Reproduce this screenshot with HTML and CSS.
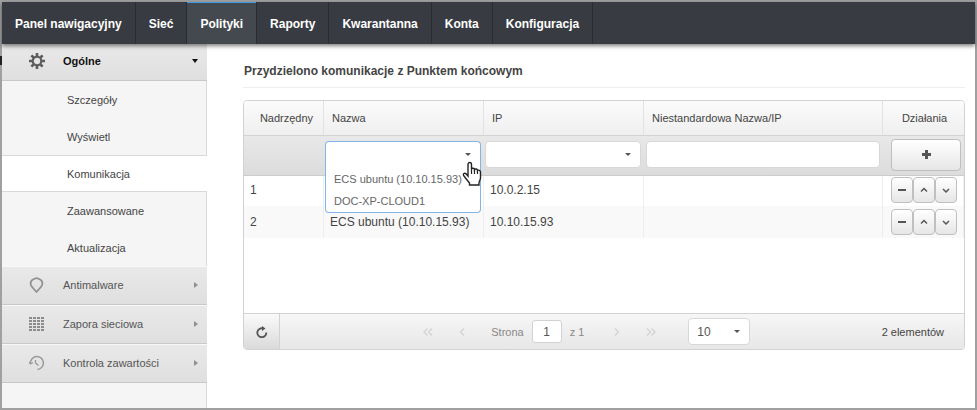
FILE: index.html
```html
<!DOCTYPE html>
<html lang="pl">
<head>
    <meta charset="UTF-8">
    <title>Polityki - Komunikacja</title>
    <link rel="stylesheet" href="styles.css">
</head>
<body>
    <div class="app">
        <nav class="topnav">
            <a href="#">Panel nawigacyjny</a>
            <a href="#">Sieć</a>
            <a href="#" class="active">Polityki</a>
            <a href="#">Raporty</a>
            <a href="#">Kwarantanna</a>
            <a href="#">Konta</a>
            <a href="#">Konfiguracja</a>
        </nav>

        <div class="layout">
            <aside class="sidebar">
                <button class="group open" type="button">
                    <svg class="group-icon" viewBox="0 0 16 16" width="16" height="16">
                        <circle cx="8" cy="8" r="4.300" fill="none" stroke="#5c5c5c" stroke-width="2.200"/>
                        <path d="M8 0v3M8 13v3M0 8h3M13 8h3M2.400 2.400l2.100 2.100M11.500 11.500l2.100 2.100M13.600 2.400l-2.100 2.100M4.500 11.500l-2.100 2.100" stroke="#5c5c5c" stroke-width="2.600"/>
                    </svg>
                    <span>Ogólne</span>
                    <i class="arrow-down"></i>
                </button>
                <ul class="submenu">
                    <li><a href="#">Szczegóły</a></li>
                    <li><a href="#">Wyświetl</a></li>
                    <li class="selected"><a href="#">Komunikacja</a></li>
                    <li><a href="#">Zaawansowane</a></li>
                    <li><a href="#">Aktualizacja</a></li>
                </ul>
                <button class="group" type="button">
                    <svg class="group-icon" viewBox="0 0 16 16" width="16" height="16">
                        <path d="M7.500 1.200C9 1.200 9.800 2.200 11.800 3c1.700 1.400 1.900 3.600 1 5.600-.8 1.600-2.800 3.600-5.300 6.200C5 12.200 3 10.200 2.200 8.600 1.300 6.600 1.500 4.400 3.200 3c2-.8 2.800-1.800 4.300-1.800z" fill="none" stroke="#929292" stroke-width="1.800"/>
                    </svg>
                    <span>Antimalware</span>
                    <i class="arrow-right"></i>
                </button>
                <button class="group" type="button">
                    <svg class="group-icon" viewBox="0 0 16 16" width="16" height="16">
                        <path d="M0 2h15M0 5h15M0 8h15M0 11h15M0 14h15" fill="none" stroke="#8c8c8c" stroke-width="2" stroke-dasharray="3 1"/>
                    </svg>
                    <span>Zapora sieciowa</span>
                    <i class="arrow-right"></i>
                </button>
                <button class="group" type="button">
                    <svg class="group-icon" viewBox="0 0 16 16" width="16" height="16" fill="none" stroke="#989898">
                        <path d="M1.500 9A6.500 6.500 0 1 1 8.500 14.500" stroke-width="1.500"/>
                        <path d="M0 7l1.500 2L4 7.500" stroke-width="1.300"/>
                        <path d="M6.500 5v3l3 2.500" stroke-width="1.300"/>
                    </svg>
                    <span>Kontrola zawartości</span>
                    <i class="arrow-right"></i>
                </button>
            </aside>

            <main class="content">
                <h1>Przydzielono komunikacje z Punktem końcowym</h1>

                <div class="grid">
                    <table>
                        <colgroup>
                            <col class="col-priority">
                            <col class="col-name">
                            <col class="col-ip">
                            <col>
                            <col class="col-actions">
                        </colgroup>
                        <thead>
                            <tr class="head">
                                <th class="center">Nadrzędny</th>
                                <th>Nazwa</th>
                                <th>IP</th>
                                <th>Niestandardowa Nazwa/IP</th>
                                <th class="center">Działania</th>
                            </tr>
                            <tr class="filters">
                                <td></td>
                                <td>
                                    <div class="combo expanded">
                                        <select aria-label="Nazwa"><option></option></select>
                                        <i class="caret"></i>
                                        <ul class="options">
                                            <li>ECS ubuntu (10.10.15.93)</li>
                                            <li>DOC-XP-CLOUD1</li>
                                        </ul>
                                        <svg class="pointer" viewBox="0 0 20 26" width="20" height="26">
                                            <path d="M6 15V3.500C6 .8 9.500.8 9.500 3.500V8c.5-1.200 3-1 3 .5 1-1 3-.6 3 1 1.200-.8 3 0 3 1.500v6c0 2-1.500 3-1.500 5v2H7.500V22C6 20.500 4.500 18 2 15c-1.600-2 .6-3.800 2.300-2L6 15z" fill="#fff" stroke="#222" stroke-width="1.400"/>
                                            <path d="M9.500 8v5M12.500 9V13M15.500 10V13" stroke="#222" stroke-width="1.200"/>
                                        </svg>
                                    </div>
                                </td>
                                <td>
                                    <div class="combo">
                                        <select aria-label="IP"><option></option></select>
                                        <i class="caret"></i>
                                    </div>
                                </td>
                                <td><input class="field" type="text" aria-label="Niestandardowa Nazwa/IP"></td>
                                <td>
                                    <button class="add" type="button" aria-label="Dodaj">
                                        <svg viewBox="0 0 9 9" width="9" height="9"><path d="M4.500 0v9M0 4.500h9" stroke="#555" stroke-width="3"/></svg>
                                    </button>
                                </td>
                            </tr>
                        </thead>
                        <tbody>
                            <tr>
                                <td>1</td>
                                <td></td>
                                <td>10.0.2.15</td>
                                <td></td>
                                <td>
                                    <div class="actions">
                                        <button type="button" aria-label="Usuń"><svg viewBox="0 0 8 8" width="8" height="8"><path d="M0 4h8" stroke-width="2"/></svg></button>
                                        <button type="button" aria-label="W górę"><svg viewBox="0 0 8 8" width="8" height="8"><path d="M1 5.500l3-3 3 3" stroke-width="1.500"/></svg></button>
                                        <button type="button" aria-label="W dół"><svg viewBox="0 0 8 8" width="8" height="8"><path d="M1 3l3 3 3-3" stroke-width="1.500"/></svg></button>
                                    </div>
                                </td>
                            </tr>
                            <tr class="alt">
                                <td>2</td>
                                <td>ECS ubuntu (10.10.15.93)</td>
                                <td>10.10.15.93</td>
                                <td></td>
                                <td>
                                    <div class="actions">
                                        <button type="button" aria-label="Usuń"><svg viewBox="0 0 8 8" width="8" height="8"><path d="M0 4h8" stroke-width="2"/></svg></button>
                                        <button type="button" aria-label="W górę"><svg viewBox="0 0 8 8" width="8" height="8"><path d="M1 5.500l3-3 3 3" stroke-width="1.500"/></svg></button>
                                        <button type="button" aria-label="W dół"><svg viewBox="0 0 8 8" width="8" height="8"><path d="M1 3l3 3 3-3" stroke-width="1.500"/></svg></button>
                                    </div>
                                </td>
                            </tr>
                        </tbody>
                    </table>

                    <div class="pager">
                        <button class="refresh" type="button" aria-label="Odśwież">
                            <svg viewBox="0 0 12 12" width="12" height="12">
                                <path d="M10.300 6.500A4.500 4.500 0 1 1 7 2.400" fill="none" stroke="#555" stroke-width="1.800"/>
                                <path d="M6 0l3.500 2.500L6 5z" fill="#555"/>
                            </svg>
                        </button>
                        <div class="pages">
                            <button class="step" type="button" aria-label="Pierwsza"><svg viewBox="0 0 10 8" width="10" height="8"><path d="M4.500.5L1 4l3.500 3.500M9 .5L5.500 4 9 7.500"/></svg></button>
                            <button class="step" type="button" aria-label="Poprzednia"><svg viewBox="0 0 10 8" width="10" height="8"><path d="M7 .5L3.500 4 7 7.500"/></svg></button>
                            <label for="page">Strona</label>
                            <input id="page" type="text" value="1">
                            <span class="total">z 1</span>
                            <button class="step" type="button" aria-label="Następna"><svg viewBox="0 0 10 8" width="10" height="8"><path d="M3 .5L6.500 4 3 7.500"/></svg></button>
                            <button class="step" type="button" aria-label="Ostatnia"><svg viewBox="0 0 10 8" width="10" height="8"><path d="M1 .5L4.500 4 1 7.500M5.500.5L9 4 5.500 7.500"/></svg></button>
                            <div class="combo page-size">
                                <select aria-label="Elementów na stronę"><option>10</option></select>
                                <i class="caret"></i>
                            </div>
                        </div>
                        <span class="count">2 elementów</span>
                    </div>
                </div>
            </main>
        </div>
    </div>
</body>
</html>
```
FILE: styles.css
```css
* {
    box-sizing: border-box;
}

body {
    margin: 0;
    font-family: "Liberation Sans", Arial, sans-serif;
    font-size: 11px;
    color: #444;
}

button, input, select {
    font-family: inherit;
    font-size: inherit;
    color: inherit;
    margin: 0;
}

ul {
    list-style: none;
    margin: 0;
    padding: 0;
}

a {
    color: inherit;
    text-decoration: none;
}

.app {
    display: flex;
    flex-direction: column;
    min-height: 100vh;
    border: 2px solid #a0a0a0;
    background: #fff;
    position: relative;
}

/* Collapse handle on the left edge */
.app::before {
    content: "";
    position: absolute;
    left: -2px;
    top: 54px;
    width: 2px;
    height: 9px;
    background: #222;
}

/* Top navigation */
.topnav {
    display: flex;
    height: 42px;
    background: #383b42;
    box-shadow: 0 2px 4px rgba(0, 0, 0, 0.5);
    position: relative;
    z-index: 1;
}

.topnav a {
    padding: 0 13px;
    border-right: 1px solid #2a2c31;
    color: #fff;
    font-size: 12px;
    font-weight: bold;
    line-height: 44px;
}

.topnav .active {
    background: #44494f;
    box-shadow: inset 0 1px #3f9ae5;
}

.layout {
    display: flex;
    flex: 1;
}

/* Sidebar */
.sidebar {
    flex: none;
    width: 205px;
    background: #f5f5f5;
    border-right: 1px solid #d8d8d8;
}

.group {
    display: flex;
    align-items: center;
    width: 205px;
    height: 39px;
    padding: 0 9px 2px 27px;
    border: 0;
    border-top: 1px solid #f8f8f8;
    border-bottom: 1px solid #c8c8c8;
    background: linear-gradient(#e9e9e9, #dfdfdf);
    color: #555;
    text-align: left;
}

.group span {
    flex: 1;
    margin-left: 18px;
}

.group.open {
    height: 37px;
    border-top: 0;
    color: #111;
    font-weight: bold;
}

.arrow-down {
    border: 3px solid transparent;
    border-top: 4px solid #111;
    border-bottom: 0;
}

.arrow-right {
    border: 3px solid transparent;
    border-left: 4px solid #909090;
    border-right: 0;
}

.submenu a {
    display: block;
    height: 37px;
    padding-left: 65px;
    line-height: 38px;
}

.submenu .selected {
    width: 205px;
    background: #fff;
    border-top: 1px solid #d8d8d8;
    border-bottom: 1px solid #d8d8d8;
}

.submenu .selected a {
    height: 35px;
    line-height: 36px;
}

/* Content */
.content {
    flex: 1;
    min-width: 0;
    padding: 18px 10px 20px 36px;
}

h1 {
    margin: 0 0 12px;
    padding-left: 1px;
    height: 26px;
    border-bottom: 1px solid #eee;
    font-size: 12px;
    line-height: 18px;
}

.grid {
    border: 1px solid #d2d2d2;
    border-radius: 4px;
}

table {
    width: 100%;
    table-layout: fixed;
    border-collapse: separate;
    border-spacing: 0;
    margin-bottom: 75px;
}

.col-priority {
    width: 80px;
}

.col-name, .col-ip {
    width: 160px;
}

.col-actions {
    width: 81px;
}

th, td {
    padding: 0;
    text-align: left;
}

.head th {
    height: 35px;
    padding-left: 8px;
    border-right: 1px solid #e2e2e2;
    border-bottom: 1px solid #d2d2d2;
    background: linear-gradient(#fbfbfb, #efefef);
    font-weight: normal;
}

.head th:first-child {
    border-top-left-radius: 3px;
}

.head th:last-child {
    border-right: 0;
    border-top-right-radius: 3px;
}

.head .center {
    padding-left: 6px;
    text-align: center;
}

.head .center:last-child {
    padding-left: 2px;
}

.filters td {
    height: 40px;
    padding: 0 3px 2px 1px;
    border-bottom: 1px solid #ccc;
    background: linear-gradient(#e8e8e8, #dcdcdc);
}

.filters td:nth-child(4) {
    padding-left: 2px;
}

.filters td:last-child {
    padding: 0 3px 2px 8px;
}

.combo {
    position: relative;
}

.combo select, .field {
    display: block;
    width: 100%;
    height: 27px;
    padding: 0 8px;
    border: 1px solid #d8d8d8;
    border-radius: 4px;
    background: #fff;
    appearance: none;
}

.caret {
    position: absolute;
    right: 10px;
    top: 12px;
    border: 3px solid transparent;
    border-top-color: #555;
    border-bottom: 0;
    pointer-events: none;
}

.combo.expanded select {
    border-color: #83b4e8;
    border-bottom: 0;
    border-radius: 4px 4px 0 0;
}

.options {
    position: absolute;
    top: 27px;
    left: 0;
    right: 0;
    z-index: 2;
    border: 1px solid #83b4e8;
    border-top: 0;
    border-radius: 0 0 4px 4px;
    background: #fff;
    color: #666;
}

.options li {
    height: 22px;
    padding-left: 8px;
    line-height: 22px;
    white-space: nowrap;
}

.pointer {
    position: absolute;
    right: -1px;
    top: 20px;
    z-index: 3;
}

.add, .actions button {
    display: flex;
    align-items: center;
    justify-content: center;
    border: 1px solid #bfbfbf;
    border-radius: 4px;
    background: linear-gradient(#fff, #e6e6e6);
}

.add {
    width: 100%;
    height: 32px;
}

tbody td {
    height: 32px;
    padding-left: 6px;
    border-right: 1px solid #eee;
    font-size: 12px;
}

tbody tr:first-child td {
    height: 30px;
    padding-bottom: 2px;
}

tbody td:last-child {
    padding-left: 8px;
}

.alt td {
    background: #f9f9f9;
}

.actions {
    display: flex;
}

.actions button {
    width: 22px;
    height: 26px;
    padding: 0;
}

.actions path {
    fill: none;
    stroke: #555;
}

/* Pager */
.pager {
    display: flex;
    align-items: center;
    height: 36px;
    border-top: 1px solid #d2d2d2;
    border-radius: 0 0 3px 3px;
    background: linear-gradient(#f6f6f6, #e7e7e7);
}

.refresh {
    width: 36px;
    height: 35px;
    padding: 2px 0 0 1px;
    border: 0;
    border-right: 1px solid #d2d2d2;
    border-radius: 0 0 0 3px;
    background: linear-gradient(#fafafa, #dadada);
}

.pages {
    display: flex;
    align-items: center;
    flex: 1;
    justify-content: center;
    color: #888;
}

.step {
    width: 34px;
    padding: 0;
    border: 0;
    background: none;
}

.step path {
    fill: none;
    stroke: #d2d2d2;
    stroke-width: 1.3;
}

.pages label {
    margin-left: 12px;
}

#page {
    width: 30px;
    height: 23px;
    margin: 0 8px;
    padding: 0;
    border: 1px solid #d2d2d2;
    border-radius: 3px;
    background: #fff;
    color: #555;
    font-size: 12px;
    text-align: center;
}

.total {
    margin-right: 16px;
}

.page-size {
    width: 62px;
    margin-left: 20px;
}

.page-size select {
    color: #555;
    font-size: 12px;
}

.count {
    margin-right: 20px;
}
```
